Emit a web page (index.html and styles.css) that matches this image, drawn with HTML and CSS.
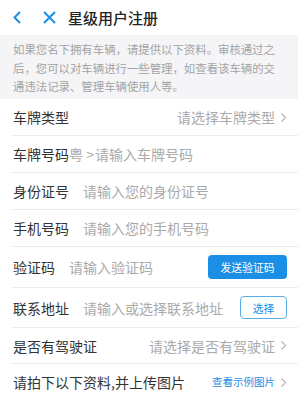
FILE: index.html
```html
<!DOCTYPE html>
<html lang="zh-CN">
<head>
    <meta charset="UTF-8">
    <meta name="viewport" content="width=device-width, initial-scale=1.0">
    <title>星级用户注册</title>
    <link rel="stylesheet" href="styles.css">
</head>
<body>
    <div class="header">
        <svg class="icon-back" width="10" height="13" viewBox="0 0 10 13"><path d="M8 1 L2.5 6.5 L8 12" fill="none" stroke="#1a8fe6" stroke-width="2"/></svg>
        <svg class="icon-close" width="13" height="13" viewBox="0 0 13 13"><path d="M1 1 L12 12 M12 1 L1 12" fill="none" stroke="#1a8fe6" stroke-width="2"/></svg>
        <span class="title">星级用户注册</span>
    </div>
    <div class="notice">如果您名下拥有车辆，请提供以下资料。审核通过之后，您可以对车辆进行一些管理，如查看该车辆的交通违法记录、管理车辆使用人等。</div>

    <div class="form">
        <div class="row">
            <span class="label">车牌类型</span>
            <span class="value right">请选择车牌类型</span>
            <svg class="chev" width="7" height="11" viewBox="0 0 7 11"><path d="M1.5 1.5 L5.5 5.5 L1.5 9.5" fill="none" stroke="#b5b5b5" stroke-width="1.2"/></svg>
        </div>
        <div class="row">
            <span class="label">车牌号码</span>
            <span class="prefix">粤 &gt;</span>
            <span class="value">请输入车牌号码</span>
        </div>
        <div class="row">
            <span class="label">身份证号</span>
            <span class="value gap">请输入您的身份证号</span>
        </div>
        <div class="row">
            <span class="label">手机号码</span>
            <span class="value gap">请输入您的手机号码</span>
        </div>
        <div class="row row-code">
            <span class="label">验证码</span>
            <span class="value gap">请输入验证码</span>
            <button class="btn-send">发送验证码</button>
        </div>
        <div class="row row-addr">
            <span class="label">联系地址</span>
            <span class="value gap">请输入或选择联系地址</span>
            <button class="btn-pick">选择</button>
        </div>
        <div class="row row-short">
            <span class="label">是否有驾驶证</span>
            <span class="value right">请选择是否有驾驶证</span>
            <svg class="chev" width="7" height="11" viewBox="0 0 7 11"><path d="M1.5 1.5 L5.5 5.5 L1.5 9.5" fill="none" stroke="#b5b5b5" stroke-width="1.2"/></svg>
        </div>
        <div class="row last">
            <span class="label">请拍下以下资料,并上传图片</span>
            <span class="link right">查看示例图片</span>
            <svg class="chev" width="7" height="11" viewBox="0 0 7 11"><path d="M1.5 1.5 L5.5 5.5 L1.5 9.5" fill="none" stroke="#b5b5b5" stroke-width="1.2"/></svg>
        </div>
    </div>
</body>
</html>
```

FILE: styles.css
```css
body {
    margin: 0;
    background: #fff;
    font-family: "Noto Sans CJK SC", "Noto Sans", sans-serif;
    color: #333;
}
.header {
    height: 35px;
    display: flex;
    align-items: center;
    padding-left: 12px;
}
.icon-close { margin-left: 21px; }
.title {
    margin-left: 12px;
    font-size: 15px;
    font-weight: 500;
    color: #222;
    line-height: 20px;
}
.notice {
    background: #f5f5f7;
    color: #a3a3a3;
    font-size: 11.4px;
    line-height: 18.5px;
    padding: 5px 20px 4px 13px;
    height: 55px;
}
.form { padding-left: 12px; }
.row {
    display: flex;
    align-items: center;
    height: 36px;
    border-bottom: 1px solid #ececec;
    padding-right: 11px;
    font-size: 14px;
    line-height: 20px;
}
.row.last { border-bottom: none; }
.row-code { height: 40px; }
.row-addr { height: 39px; }
.row-short { height: 35px; }
.label {
    color: #333;
    padding-left: 1px;
}
.value { color: #aaa; }
.value.gap { margin-left: 14px; }
.right { margin-left: auto; }
.prefix {
    color: #aaa;
    margin-right: 1px;
}
.chev { margin-left: 5px; }
.link {
    color: #1a8fe6;
    font-size: 10.5px;
}
button {
    font-family: inherit;
    cursor: pointer;
}
.btn-send {
    margin-left: auto;
    width: 79px;
    height: 24px;
    border: none;
    border-radius: 4px;
    background: #1b8fe6;
    color: #fff;
    font-size: 10.8px;
    padding: 0;
}
.btn-pick {
    margin-left: auto;
    width: 47px;
    height: 23px;
    border: 1px solid #5aaee8;
    border-radius: 4px;
    background: #fff;
    color: #1a8fe6;
    font-size: 10.8px;
    padding: 0;
}
```
